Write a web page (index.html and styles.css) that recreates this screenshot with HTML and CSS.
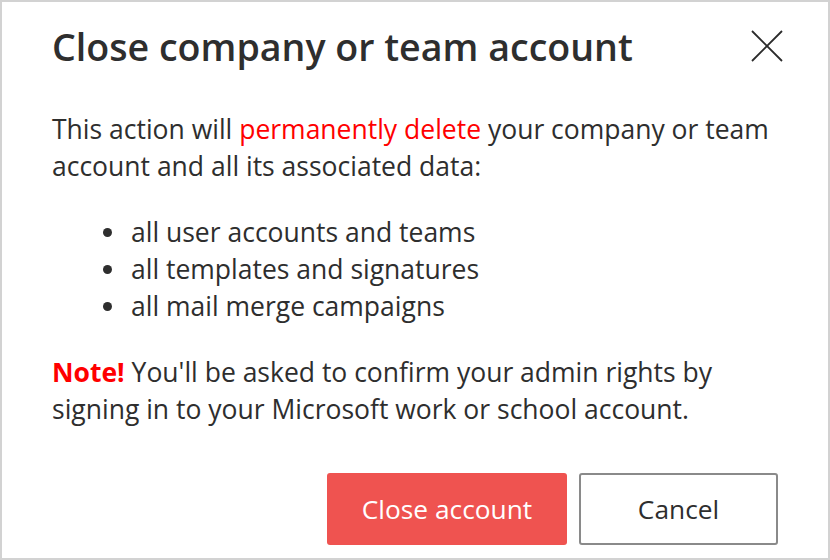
FILE: index.html
```html
<!DOCTYPE html>
<html lang="en">
<head>
<meta charset="utf-8">
<title>Close company or team account</title>
<link rel="stylesheet" href="styles.css">
</head>
<body>
<div class="dialog">
  <div class="header">
    <h1 class="title">Close company or team account</h1>
    <button class="close" aria-label="Close">
      <svg width="32" height="32" viewBox="0 0 32 32"><path d="M1 1 L31 31 M31 1 L1 31" stroke="#2b2b2b" stroke-width="1.8" fill="none"/></svg>
    </button>
  </div>
  <p class="text">This action will <span class="danger">permanently delete</span> your company or team account and all its associated data:</p>
  <ul class="list">
    <li>all user accounts and teams</li>
    <li>all templates and signatures</li>
    <li>all mail merge campaigns</li>
  </ul>
  <p class="text note"><strong class="danger">Note!</strong> You'll be asked to confirm your admin rights by signing in to your Microsoft work or school account.</p>
  <div class="footer">
    <button class="btn btn-primary">Close account</button>
    <button class="btn btn-secondary">Cancel</button>
  </div>
</div>
</body>
</html>
```
FILE: styles.css
```css
* { box-sizing: border-box; }
html, body { margin: 0; padding: 0; background: #fff; }
body { font-family: "Open Sans", "Noto Sans", sans-serif; color: #2e2e2e; }
.dialog {
  width: 830px;
  height: 560px;
  border: 2px solid #d2d2d2;
  padding: 23px 50px 0 50px;
  display: flex;
  flex-direction: column;
}
.header {
  display: flex;
  justify-content: space-between;
  align-items: center;
  height: 44px;
}
.title {
  margin: 0;
  font-size: 37.6px;
  font-weight: 600;
  line-height: 44px;
}
.close {
  border: 0;
  background: none;
  padding: 0;
  width: 32px;
  height: 32px;
  margin-right: -5px;
  margin-top: -2px;
  display: flex;
}
.text {
  margin: 42px 0 0 0;
  font-size: 26.5px;
  line-height: 37px;
}
.note { max-width: 715px; }
.list + .text { margin-top: 29px; }
.danger { color: #ff0000; }
strong.danger { font-weight: 700; }
.list {
  margin: 29px 0 0 0;
  padding: 0 0 0 51px;
  list-style: none;
  font-size: 26.5px;
  line-height: 37px;
}
.list li { display: flex; align-items: center; }
.list li::before {
  content: "";
  width: 9px;
  height: 9px;
  border-radius: 50%;
  background: #2e2e2e;
  margin-right: 19px;
}
.footer {
  margin-top: 45px;
  display: flex;
  justify-content: flex-end;
  gap: 12px;
}
.btn {
  height: 72px;
  font-family: inherit;
  font-size: 26.3px;
  border-radius: 3px;
  cursor: pointer;
}
.btn-primary {
  width: 240px;
  background: #ef5350;
  border: 0;
  color: #fff;
}
.btn-secondary {
  width: 199px;
  background: #fff;
  border: 2px solid #8a8a8a;
  color: #2e2e2e;
}
```
